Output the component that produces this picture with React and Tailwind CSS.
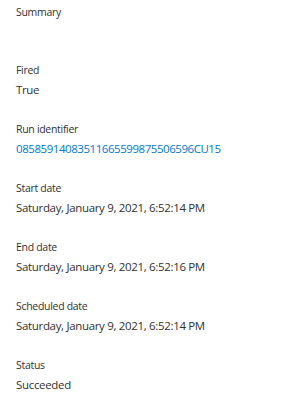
export default function App() {
  const rows = [
    ["Fired", "True"],
    ["Run identifier", "08585914083511665599875506596CU15", true],
    ["Start date", "Saturday, January 9, 2021, 6:52:14 PM"],
    ["End date", "Saturday, January 9, 2021, 6:52:16 PM"],
    ["Scheduled date", "Saturday, January 9, 2021, 6:52:14 PM"],
    ["Status", "Succeeded"],
  ];
  return (
    <div className="w-[297px] h-[400px] bg-white overflow-hidden px-4 pt-[2px] text-[#323130]" style={{ fontFamily: '"Open Sans", sans-serif' }}>
      <div className="text-[10.5px] tracking-[-0.3px] leading-[20px]">Summary</div>
      <div className="flex flex-col gap-[19px] mt-[38px]">
        {rows.map(([label, value, link]) => (
          <div key={label} className="flex flex-col">
            <div className="text-[10.5px] tracking-[-0.3px] leading-[20px]">{label}</div>
            <div className={`text-[11.5px] leading-[20px] ${link ? "text-[#0078d4] tracking-[-0.45px]" : "tracking-[-0.33px]"}`}>{value}</div>
          </div>
        ))}
      </div>
    </div>
  );
}
